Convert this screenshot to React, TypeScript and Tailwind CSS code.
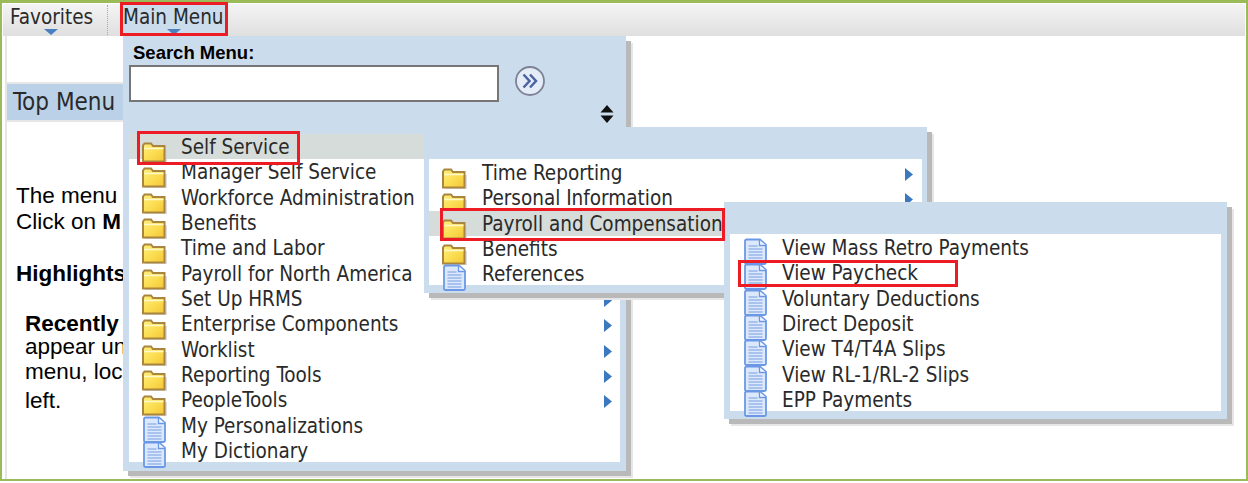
const menuFont = "font-['DejaVu_Sans',sans-serif] [font-stretch:condensed] text-[20.5px] text-[#2a2a2a]"

type Item = { label: string; doc?: boolean; arrow?: boolean; selected?: boolean }

const mainItems: Item[] = [
  { label: 'Self Service', selected: true },
  { label: 'Manager Self Service' },
  { label: 'Workforce Administration' },
  { label: 'Benefits' },
  { label: 'Time and Labor' },
  { label: 'Payroll for North America' },
  { label: 'Set Up HRMS', arrow: true },
  { label: 'Enterprise Components', arrow: true },
  { label: 'Worklist', arrow: true },
  { label: 'Reporting Tools', arrow: true },
  { label: 'PeopleTools', arrow: true },
  { label: 'My Personalizations', doc: true },
  { label: 'My Dictionary', doc: true },
]

const selfServiceItems: Item[] = [
  { label: 'Time Reporting', arrow: true },
  { label: 'Personal Information', arrow: true },
  { label: 'Payroll and Compensation', selected: true },
  { label: 'Benefits' },
  { label: 'References', doc: true },
]

const payrollItems: Item[] = [
  { label: 'View Mass Retro Payments', doc: true },
  { label: 'View Paycheck', doc: true },
  { label: 'Voluntary Deductions', doc: true },
  { label: 'Direct Deposit', doc: true },
  { label: 'View T4/T4A Slips', doc: true },
  { label: 'View RL-1/RL-2 Slips', doc: true },
  { label: 'EPP Payments', doc: true },
]

const FolderIcon = () => (
  <svg width="26" height="22" viewBox="0 0 26 22" className="shrink-0 mt-[8px]">
    <defs>
      <linearGradient id="folderFill" x1="0" y1="0" x2="1" y2="1">
        <stop offset="0" stopColor="#fff07c" />
        <stop offset="0.55" stopColor="#fbdc50" />
        <stop offset="1" stopColor="#f3c437" />
      </linearGradient>
    </defs>
    <path d="M4 21h22V7H4z" fill="#cfcfcf" opacity="0.7" />
    <path d="M2 19.500V3.500L3.500 1.500h6.500l2 2.500h11.500v15.500z" fill="url(#folderFill)" stroke="#a9853f" strokeWidth="2" />
    <path d="M3 6.500h19.500" stroke="#fff8c8" strokeWidth="1.500" />
  </svg>
)

const DocIcon = () => (
  <svg width="26" height="27" viewBox="0 0 26 27" className="shrink-0 mt-[3px]">
    <path d="M3 3a1.500 1.500 0 0 1 1.500-1.500H18L24 7v17.500a1.500 1.500 0 0 1-1.500 1.500h-18A1.500 1.500 0 0 1 3 24.500z" fill="#dce8fb" stroke="#6b98e6" strokeWidth="1.800" />
    <path d="M17.500 2v5.500H24" fill="#f4f8ff" stroke="#6b98e6" strokeWidth="1.300" />
    <path d="M6.500 8h9M6.500 11h14M6.500 14h14M6.500 17h14M6.500 20h14M6.500 23h14" stroke="#98b6ea" strokeWidth="1.300" />
  </svg>
)

const ArrowRight = ({ right }: { right: string }) => (
  <svg width="8" height="13" viewBox="0 0 8 13" className={`absolute top-[8px] ${right}`}>
    <path d="M0 0l8 6.500-8 6.500z" fill="#3b78bd" />
  </svg>
)

const MenuRow = ({ item, arrowRight = 'right-[8px]', textPad = 'pl-[14px]' }: { item: Item; arrowRight?: string; textPad?: string }) => (
  <div className={`relative flex h-[25.33px] pl-[12px] leading-[26px] ${item.selected ? 'bg-[#d5dcd9]' : ''}`}>
    {item.doc ? <DocIcon /> : <FolderIcon />}
    <span className={`relative whitespace-nowrap ${textPad}`}>{item.label}</span>
    {item.arrow && <ArrowRight right={arrowRight} />}
  </div>
)

const TabArrow = ({ left }: { left: string }) => (
  <div className={`h-0 w-0 border-x-[7px] border-t-[6px] border-x-transparent border-t-[#4a80c0] ${left}`} />
)

const App = () => {
  return (
    <div className="relative h-[483px] w-[1248px] overflow-hidden bg-white">
      <div className="flex h-[481px] flex-col border-[3px] border-r-2 border-l-2 border-b-2 border-[#9bbb59] p-px pb-0">
        {/* toolbar */}
        <div className={`flex h-[32px] shrink-0 bg-gradient-to-b from-[#f4f4f4] to-[#dfdfdf] ${menuFont}`}>
          <div className="w-[104px] pl-[7px]">
            <div className="h-[25px] leading-[26px]">Favorites</div>
            <TabArrow left="ml-[34px]" />
          </div>
          <div className="my-px border-l border-dotted border-[#a9a9a9]" />
          <div className="ml-[13px] w-[105px] bg-[#cbdcec] pl-[2px]">
            <div className="h-[25px] leading-[26px]">Main Menu</div>
            <TabArrow left="ml-[44px]" />
          </div>
        </div>

        {/* page behind the menus */}
        <div className="ml-[2px] flex-1 border-l-2 border-[#e6e6e6] font-['Liberation_Sans',sans-serif] text-[22.5px] leading-[25px] text-black">
          <div className="mt-[46px] h-[40px] w-[120px] border-y-2 border-[#e6e6e6] bg-[#bad1e7] pl-[6px] font-['DejaVu_Sans',sans-serif] [font-stretch:condensed] text-[24px] leading-[36px] text-[#2a2a2a]">
            Top Menu
          </div>
          <div className="pt-[61px] pl-[9px]">
            <p>The menu</p>
            <p className="mt-px">Click on <b>M</b></p>
            <p className="mt-[27px] font-bold">Highlights</p>
            <div className="mt-[25px] pl-[9px]">
              <p className="font-bold">Recently</p>
              <p className="-mt-[2px]">appear un</p>
              <p>menu, loc</p>
              <p className="mt-[4px]">left.</p>
            </div>
          </div>
        </div>
      </div>

      {/* main menu flyout */}
      <div className={`absolute top-[36px] left-[123px] h-[435px] w-[503px] bg-[#cbdcec] shadow-[5px_5px_0_#b9b9b9,7px_7px_0_#e6e6e6] ${menuFont}`}>
        <div className="relative h-[98px] px-[6px] pt-[6px]">
          <div className="pl-[4px] font-['Liberation_Sans',sans-serif] text-[18.5px] leading-[21px] font-bold text-black [font-stretch:normal]">Search Menu:</div>
          <div className="mt-[2px] flex items-start">
            <input className="h-[37px] w-[370px] border-2 border-[#767676] bg-white" />
            <svg width="32" height="32" viewBox="0 0 32 32" className="ml-[15px]">
              <circle cx="16" cy="16" r="14" fill="#e4ecf7" stroke="#7d8296" strokeWidth="1.800" />
              <path d="M9.500 9.500l6 6.500-6 6.500M16 9.500l6 6.500-6 6.500" fill="none" stroke="#4b62a3" strokeWidth="2.500" />
            </svg>
          </div>
          <svg width="14" height="18" viewBox="0 0 14 18" className="absolute top-[69px] right-[12px]">
            <path d="M7 0l6.500 7.500H.5zM.5 10.500h13L7 18z" fill="#111" />
          </svg>
        </div>
        <div className="mx-[6px] h-[328px] bg-white">
          {mainItems.map((item) => (
            <MenuRow key={item.label} item={item} />
          ))}
        </div>
      </div>

      {/* self service flyout */}
      <div className={`absolute top-[127px] left-[424px] flex h-[166px] w-[503px] flex-col bg-[#cbdcec] shadow-[5px_5px_0_#b9b9b9,7px_7px_0_#e6e6e6] ${menuFont}`}>
        <div className="mx-[5px] mt-[32px] h-[126px] bg-white pt-px">
          {selfServiceItems.map((item) => (
            <MenuRow key={item.label} item={item} arrowRight="right-[9px]" textPad="pl-[15px]" />
          ))}
        </div>
      </div>

      {/* payroll flyout */}
      <div className={`absolute top-[202px] left-[724px] flex h-[217px] w-[503px] flex-col bg-[#cbdcec] shadow-[5px_5px_0_#b9b9b9,7px_7px_0_#e6e6e6] ${menuFont}`}>
        <div className="mx-[6px] mt-[32px] h-[177px] bg-white pt-px">
          {payrollItems.map((item) => (
            <MenuRow key={item.label} item={item} />
          ))}
        </div>
      </div>

      {/* red callouts added to the screenshot */}
      <div className="absolute top-[2px] left-[120px] h-[34px] w-[108px] border-[3px] border-[#ed1c24]" />
      <div className="absolute top-[131px] left-[137px] h-[34px] w-[163px] border-[3px] border-[#ed1c24]" />
      <div className="absolute top-[208px] left-[440px] h-[33px] w-[285px] border-[3px] border-[#ed1c24]" />
      <div className="absolute top-[260px] left-[738px] h-[27px] w-[220px] border-[3px] border-[#ed1c24]" />
    </div>
  )
}

export default App
